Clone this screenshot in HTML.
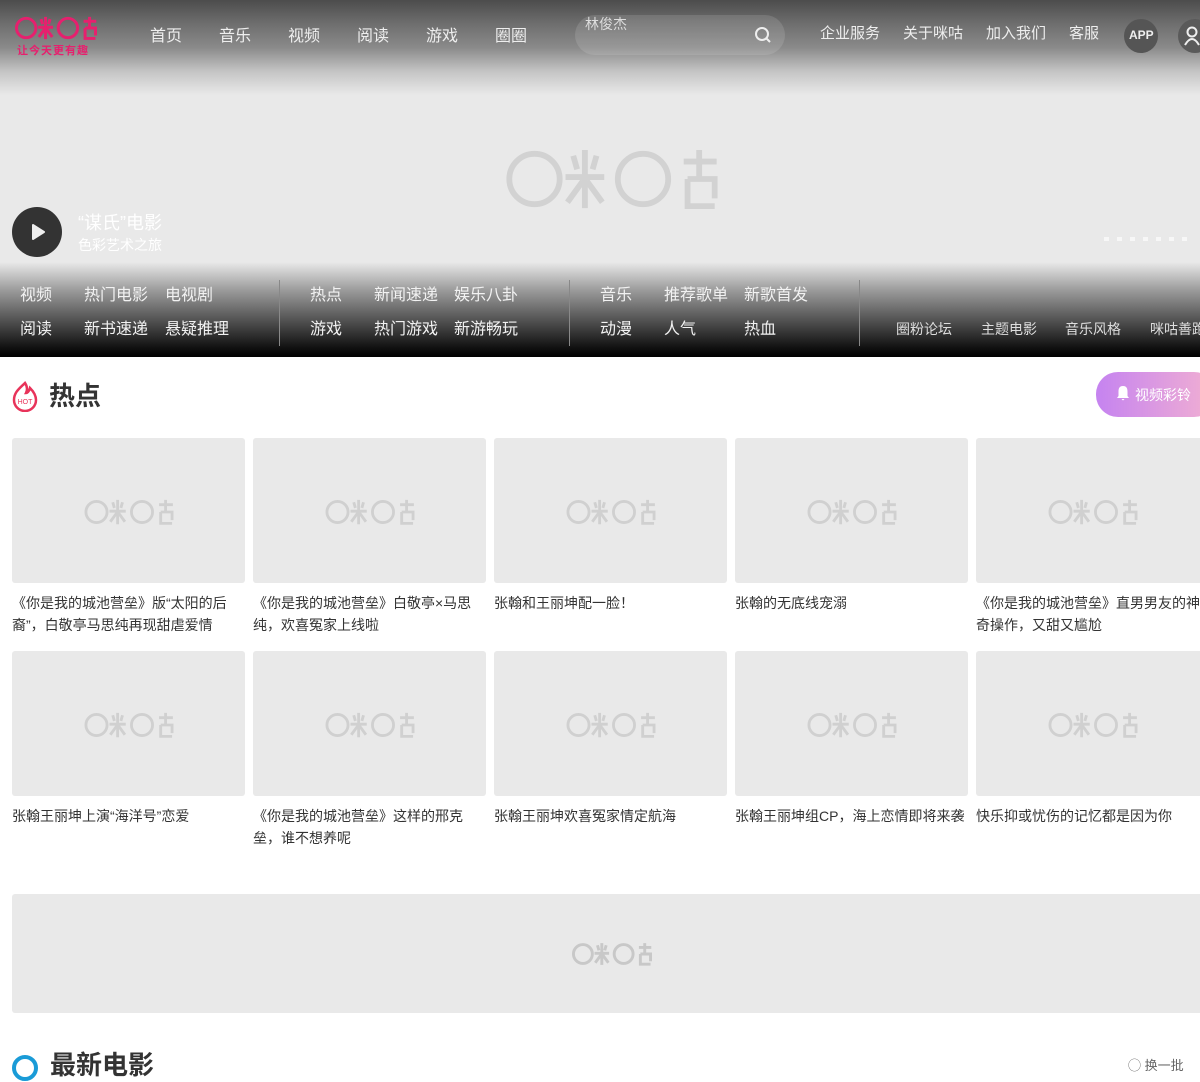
<!DOCTYPE html>
<html><head><meta charset="utf-8"><style>
*{margin:0;padding:0;box-sizing:border-box}
body{width:1200px;height:1063px;overflow:hidden;background:#fff;font-family:"Liberation Sans","Noto Sans CJK SC",sans-serif;position:relative}
.abs{position:absolute}
.hero{left:0;top:0;width:1200px;height:357px;background:#e9e9e9}
.hdr{left:0;top:0;width:1200px;height:95px;background:linear-gradient(#4c4c4c 0%,#6e6e6e 25%,#8a8a8a 50%,#c4c4c4 75%,#e9e9e9 100%)}
.nav a{position:absolute;top:22px;color:#eee;font-size:16px}
.navbar{left:0;top:262px;width:1200px;height:95px;background:linear-gradient(#e9e9e9 0%,#9a9a9a 30%,#555 60%,#111 90%,#000 100%)}
.nb{position:absolute;color:#f2f2f2;font-size:16px;white-space:nowrap}
.nb2{position:absolute;color:#ddd;font-size:14px;top:57px;white-space:nowrap}
.sep{position:absolute;top:18px;width:1px;height:66px;background:#888}
.card{position:absolute;width:233px;height:145px;background:#e9e9e9;border-radius:3px}
.cap{position:absolute;width:233px;font-size:14px;line-height:22px;color:#333;white-space:nowrap;overflow:hidden}
svg.lg{position:absolute}
</style></head><body>
<svg width="0" height="0" style="position:absolute"><defs><g id="mg" fill="none" stroke-linecap="butt">
<circle cx="30" cy="32" r="26"/>
<path d="M70 8 L74 22 M94 8 L90 22 M62 30 H102 M82 2 V62 M80 34 L64 56 M84 34 L100 56"/>
<circle cx="142" cy="32" r="26"/>
<path d="M184 14 H218 M200 2 V30 M188 32 V60 H216 M188 32 H216 V52"/>
</g></defs></svg>

<div class="abs hero"></div>
<div class="abs hdr"></div>
<svg class="lg" style="left:15px;top:16px" width="82" height="24" viewBox="0 0 220 64" stroke="#e6206e" stroke-width="8"><use href="#mg"/></svg>
<div class="abs" style="left:17px;top:42px;font-size:11px;color:#e6206e;letter-spacing:1px;font-weight:bold">让今天更有趣</div>
<div class="nav">
<a style="left:150px">首页</a><a style="left:219px">音乐</a><a style="left:288px">视频</a><a style="left:357px">阅读</a><a style="left:426px">游戏</a><a style="left:495px">圈圈</a>
</div>
<div class="abs" style="left:575px;top:15px;width:210px;height:40px;border-radius:20px;background:rgba(255,255,255,0.12)"></div>
<div class="abs" style="left:585px;top:14px;font-size:14px;color:#ddd">林俊杰</div>
<svg class="lg" style="left:754px;top:26px" width="18" height="18" viewBox="0 0 18 18" fill="none" stroke="#eee" stroke-width="2"><circle cx="8" cy="8" r="6"/><path d="M12.5 12.5 L16 16"/></svg>
<div class="nav">
<a style="left:820px;font-size:15px">企业服务</a><a style="left:903px;font-size:15px">关于咪咕</a><a style="left:986px;font-size:15px">加入我们</a><a style="left:1069px;font-size:15px">客服</a>
</div>
<div class="abs" style="left:1124px;top:19px;width:34px;height:34px;border-radius:50%;background:#555"></div>
<div class="abs" style="left:1129px;top:28px;font-size:12px;color:#eee;font-weight:bold">APP</div>
<div class="abs" style="left:1178px;top:19px;width:34px;height:34px;border-radius:50%;background:#5a5a5a"></div>
<svg class="lg" style="left:1184px;top:26px" width="16" height="20" viewBox="0 0 16 20" fill="none" stroke="#eee" stroke-width="2"><circle cx="8" cy="6" r="4.5"/><path d="M1 19 Q8 7 15 19"/></svg>

<svg class="lg" style="left:503px;top:148px" width="218" height="62" viewBox="0 0 220 64" stroke="#d2d2d2" stroke-width="6"><use href="#mg"/></svg>
<div class="abs" style="left:12px;top:207px;width:50px;height:50px;border-radius:50%;background:#333"></div>
<svg class="lg" style="left:31px;top:224px" width="14" height="16" viewBox="0 0 14 16"><path d="M2 1 L13 8 L2 15 Z" fill="#eee" stroke="#eee" stroke-linejoin="round" stroke-width="2"/></svg>
<div class="abs" style="left:78px;top:209px;font-size:18px;color:#fff">“谋氏”电影</div>
<div class="abs" style="left:78px;top:235px;font-size:14px;color:#fff">色彩艺术之旅</div>
<div class="abs" style="left:1104px;top:237px;width:90px;height:4px;background:repeating-linear-gradient(90deg,#f7f7f7 0 5px,transparent 5px 13px)"></div>

<div class="abs navbar">
<div class="nb" style="left:20px;top:19px">视频</div><div class="nb" style="left:84px;top:19px">热门电影</div><div class="nb" style="left:165px;top:19px">电视剧</div>
<div class="nb" style="left:20px;top:53px">阅读</div><div class="nb" style="left:84px;top:53px">新书速递</div><div class="nb" style="left:165px;top:53px">悬疑推理</div>
<div class="sep" style="left:279px"></div>
<div class="nb" style="left:310px;top:19px">热点</div><div class="nb" style="left:374px;top:19px">新闻速递</div><div class="nb" style="left:454px;top:19px">娱乐八卦</div>
<div class="nb" style="left:310px;top:53px">游戏</div><div class="nb" style="left:374px;top:53px">热门游戏</div><div class="nb" style="left:454px;top:53px">新游畅玩</div>
<div class="sep" style="left:569px"></div>
<div class="nb" style="left:600px;top:19px">音乐</div><div class="nb" style="left:664px;top:19px">推荐歌单</div><div class="nb" style="left:744px;top:19px">新歌首发</div>
<div class="nb" style="left:600px;top:53px">动漫</div><div class="nb" style="left:664px;top:53px">人气</div><div class="nb" style="left:744px;top:53px">热血</div>
<div class="sep" style="left:859px"></div>
<div class="nb2" style="left:896px">圈粉论坛</div><div class="nb2" style="left:981px">主题电影</div><div class="nb2" style="left:1065px">音乐风格</div><div class="nb2" style="left:1150px">咪咕善跑</div>
</div>

<svg class="lg" style="left:10px;top:380px" width="30" height="32" viewBox="0 0 30 32"><path d="M15 3 C10 8 4 12 4 20 A11 11 0 0 0 26 20 C26 14 22 10 20 8 C19 12 17 13 16 13 C18 9 17 6 15 3Z" fill="none" stroke="#e8335a" stroke-width="2.5"/><text x="15" y="24" font-size="7" fill="#e8335a" text-anchor="middle" font-family="Liberation Sans">HOT</text></svg>
<div class="abs" style="left:49px;top:376px;font-size:26px;font-weight:bold;color:#333">热点</div>
<div class="abs" style="left:1096px;top:372px;width:120px;height:45px;border-radius:22px;background:linear-gradient(90deg,#c583f0,#f2b0d2)"></div>
<svg class="lg" style="left:1116px;top:385px" width="14" height="16" viewBox="0 0 14 16"><path d="M7 1 C3 1 2.5 4 2.5 7 V11 L1 13 H13 L11.5 11 V7 C11.5 4 11 1 7 1Z M5.5 14 H8.5 L7 15.5Z" fill="#fff"/></svg>
<div class="abs" style="left:1135px;top:385px;font-size:14px;color:#fff">视频彩铃</div>

<div class="card" style="left:12px;top:438px"></div><div class="card" style="left:253px;top:438px"></div><div class="card" style="left:494px;top:438px"></div><div class="card" style="left:735px;top:438px"></div><div class="card" style="left:976px;top:438px"></div>
<div class="card" style="left:12px;top:651px"></div><div class="card" style="left:253px;top:651px"></div><div class="card" style="left:494px;top:651px"></div><div class="card" style="left:735px;top:651px"></div><div class="card" style="left:976px;top:651px"></div>
<svg class="lg" style="left:84px;top:499px" width="90" height="26" viewBox="0 0 220 64" stroke="#d0d0d0" stroke-width="7"><use href="#mg"/></svg>
<svg class="lg" style="left:325px;top:499px" width="90" height="26" viewBox="0 0 220 64" stroke="#d0d0d0" stroke-width="7"><use href="#mg"/></svg>
<svg class="lg" style="left:566px;top:499px" width="90" height="26" viewBox="0 0 220 64" stroke="#d0d0d0" stroke-width="7"><use href="#mg"/></svg>
<svg class="lg" style="left:807px;top:499px" width="90" height="26" viewBox="0 0 220 64" stroke="#d0d0d0" stroke-width="7"><use href="#mg"/></svg>
<svg class="lg" style="left:1048px;top:499px" width="90" height="26" viewBox="0 0 220 64" stroke="#d0d0d0" stroke-width="7"><use href="#mg"/></svg>
<svg class="lg" style="left:84px;top:712px" width="90" height="26" viewBox="0 0 220 64" stroke="#d0d0d0" stroke-width="7"><use href="#mg"/></svg>
<svg class="lg" style="left:325px;top:712px" width="90" height="26" viewBox="0 0 220 64" stroke="#d0d0d0" stroke-width="7"><use href="#mg"/></svg>
<svg class="lg" style="left:566px;top:712px" width="90" height="26" viewBox="0 0 220 64" stroke="#d0d0d0" stroke-width="7"><use href="#mg"/></svg>
<svg class="lg" style="left:807px;top:712px" width="90" height="26" viewBox="0 0 220 64" stroke="#d0d0d0" stroke-width="7"><use href="#mg"/></svg>
<svg class="lg" style="left:1048px;top:712px" width="90" height="26" viewBox="0 0 220 64" stroke="#d0d0d0" stroke-width="7"><use href="#mg"/></svg>

<div class="cap" style="left:12px;top:592px">《你是我的城池营垒》版“太阳的后<br>裔”，白敬亭马思纯再现甜虐爱情</div>
<div class="cap" style="left:253px;top:592px">《你是我的城池营垒》白敬亭×马思<br>纯，欢喜冤家上线啦</div>
<div class="cap" style="left:494px;top:592px">张翰和王丽坤配一脸！</div>
<div class="cap" style="left:735px;top:592px">张翰的无底线宠溺</div>
<div class="cap" style="left:976px;top:592px;width:224px">《你是我的城池营垒》直男男友的神<br>奇操作，又甜又尴尬</div>
<div class="cap" style="left:12px;top:805px">张翰王丽坤上演“海洋号”恋爱</div>
<div class="cap" style="left:253px;top:805px">《你是我的城池营垒》这样的邢克<br>垒，谁不想养呢</div>
<div class="cap" style="left:494px;top:805px">张翰王丽坤欢喜冤家情定航海</div>
<div class="cap" style="left:735px;top:805px">张翰王丽坤组CP，海上恋情即将来袭</div>
<div class="cap" style="left:976px;top:805px;width:224px">快乐抑或忧伤的记忆都是因为你</div>

<div class="abs" style="left:12px;top:894px;width:1200px;height:119px;background:#e9e9e9;border-radius:3px"></div>
<svg class="lg" style="left:572px;top:942px" width="80" height="24" viewBox="0 0 220 64" stroke="#c8c8c8" stroke-width="8"><use href="#mg"/></svg>

<div class="abs" style="left:12px;top:1055px;width:26px;height:26px;border-radius:50%;border:4px solid #1a9bd7"></div>
<div class="abs" style="left:50px;top:1045px;font-size:26px;font-weight:bold;color:#333">最新电影</div>
<div class="abs" style="left:1128px;top:1055px;font-size:13px;color:#666">◯ 换一批</div>
</body></html>
